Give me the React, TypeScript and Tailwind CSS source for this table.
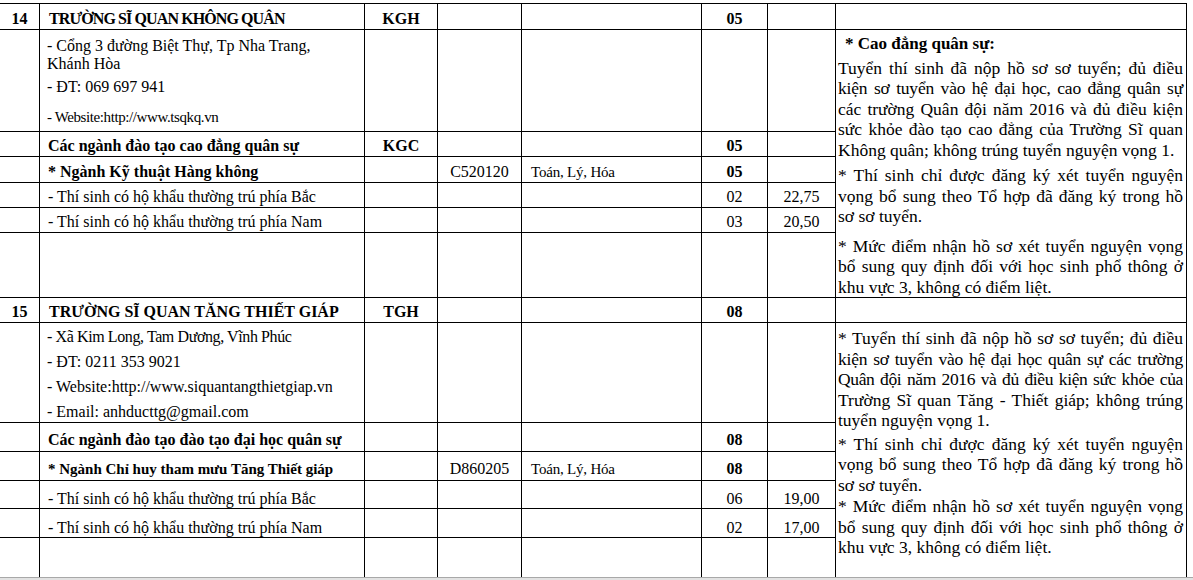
import React from "react";

type P = { children?: React.ReactNode; className?: string };

function Cell({ children, className = "" }: P) {
  return (
    <div className={`border-r border-b border-black flex items-center min-w-0 ${className}`}>
      {children}
    </div>
  );
}

function LastCell({ children, className = "" }: P) {
  return <div className={`border-r border-black flex min-w-0 ${className}`}>{children}</div>;
}

function J({ children, className = "" }: P) {
  return <div className={`text-justify [text-align-last:justify] ${className}`}>{children}</div>;
}

function L({ children }: P) {
  return <div className="whitespace-nowrap">{children}</div>;
}

function Empty({ n }: { n: number }) {
  return (
    <>
      {Array.from({ length: n }).map((_, i) => (
        <Cell key={i} />
      ))}
    </>
  );
}

function Para2() {
  return (
    <>
      <J>* Thí sinh chỉ được đăng ký xét tuyển nguyện</J>
      <J>vọng bổ sung theo Tổ hợp đã đăng ký trong hồ</J>
      <L>sơ sơ tuyển.</L>
    </>
  );
}

function Para3() {
  return (
    <>
      <J>* Mức điểm nhận hồ sơ xét tuyển nguyện vọng</J>
      <J>bổ sung quy định đối với học sinh phổ thông ở</J>
      <L>khu vực 3, không có điểm liệt.</L>
    </>
  );
}

export default function App() {
  return (
    <div className="w-[1193px] h-[580px] bg-white overflow-hidden font-['Liberation_Serif','Times_New_Roman',serif] text-black text-[16px] leading-[18px]">
      <div className="pt-[3px]">
        <div className="grid w-[1187px] grid-cols-[40px_325px_73px_84px_180px_66px_68px_351px] grid-rows-[26px_102px_25px_26px_25px_25px_65px_25px_100px_29px_29px_28px_29px_39px] border-t border-black">
          {/* Row 14 header */}
          <Cell className="justify-center pt-[4px] font-bold">14</Cell>
          <Cell className="pl-[9px] pt-[4px] font-bold tracking-[-0.9px]">TRƯỜNG SĨ QUAN KHÔNG QUÂN</Cell>
          <Cell className="justify-center pt-[4px] font-bold">KGH</Cell>
          <Empty n={2} />
          <Cell className="justify-center pt-[4px] font-bold">05</Cell>
          <Empty n={2} />

          {/* Address 14 */}
          <Cell />
          <Cell className="!items-start">
            <div className="pl-[7px] pt-[7px]">
              <div>- Cổng 3 đường Biệt Thự, Tp Nha Trang,</div>
              <div>Khánh Hòa</div>
              <div className="mt-[5px]">- ĐT: 069 697 941</div>
              <div className="mt-[12px] text-[15px] tracking-[-0.4px]">- Website:http://www.tsqkq.vn</div>
            </div>
          </Cell>
          <Empty n={5} />
          <Cell className="row-span-6 !items-start text-[17.5px] leading-[20.5px]">
            <div className="w-full pl-[2px] pr-[3px] pt-[4px]">
              <div className="pl-[7px] font-bold text-[17px]">* Cao đẳng quân sự:</div>
              <div className="mt-[3px]">
                <J>Tuyển thí sinh đã nộp hồ sơ sơ tuyển; đủ điều</J>
                <J className="tracking-[-0.2px]">kiện sơ tuyển vào hệ đại học, cao đẳng quân sự</J>
                <J>các trường Quân đội năm 2016 và đủ điều kiện</J>
                <J>sức khỏe đào tạo cao đẳng của Trường Sĩ quan</J>
                <L>Không quân; không trúng tuyển nguyện vọng 1.</L>
              </div>
              <div className="mt-[5px]">
                <Para2 />
              </div>
              <div className="mt-[9px]">
                <Para3 />
              </div>
            </div>
          </Cell>

          {/* KGC */}
          <Cell />
          <Cell className="pl-[8px] pt-[4px] font-bold">Các ngành đào tạo cao đẳng quân sự</Cell>
          <Cell className="justify-center pt-[4px] font-bold">KGC</Cell>
          <Empty n={2} />
          <Cell className="justify-center pt-[4px] font-bold">05</Cell>
          <Cell />

          {/* Ngành KT Hàng không */}
          <Cell />
          <Cell className="pl-[8px] pt-[4px] font-bold">* Ngành Kỹ thuật Hàng không</Cell>
          <Cell />
          <Cell className="justify-center pt-[4px]">C520120</Cell>
          <Cell className="pl-[9px] pt-[4px] text-[15px] tracking-[-0.2px]">Toán, Lý, Hóa</Cell>
          <Cell className="justify-center pt-[4px] font-bold">05</Cell>
          <Cell />

          <Cell />
          <Cell className="pl-[8px] pt-[4px]">- Thí sinh có hộ khẩu thường trú phía Bắc</Cell>
          <Empty n={3} />
          <Cell className="justify-center pt-[4px]">02</Cell>
          <Cell className="justify-center pt-[4px]">22,75</Cell>

          <Cell />
          <Cell className="pl-[8px] pt-[4px]">- Thí sinh có hộ khẩu thường trú phía Nam</Cell>
          <Empty n={3} />
          <Cell className="justify-center pt-[4px]">03</Cell>
          <Cell className="justify-center pt-[4px]">20,50</Cell>

          <Empty n={7} />

          {/* Row 15 header */}
          <Cell className="justify-center pt-[4px] font-bold">15</Cell>
          <Cell className="pl-[9px] pt-[4px] font-bold">TRƯỜNG SĨ QUAN TĂNG THIẾT GIÁP</Cell>
          <Cell className="justify-center pt-[4px] font-bold">TGH</Cell>
          <Empty n={2} />
          <Cell className="justify-center pt-[4px] font-bold">08</Cell>
          <Empty n={2} />

          {/* Address 15 */}
          <Cell />
          <Cell className="!items-start">
            <div className="pl-[7px] pt-[5px]">
              <div className="tracking-[-0.4px]">- Xã Kim Long, Tam Dương, Vĩnh Phúc</div>
              <div className="mt-[7px]">- ĐT: 0211 353 9021</div>
              <div className="mt-[7px]">- Website:http://www.siquantangthietgiap.vn</div>
              <div className="mt-[7px]">- Email: anhducttg@gmail.com</div>
            </div>
          </Cell>
          <Empty n={5} />
          <LastCell className="row-span-6 items-start text-[17.5px] leading-[20.5px]">
            <div className="w-full pl-[2px] pr-[3px] pt-[5px]">
              <div>
                <J>* Tuyển thí sinh đã nộp hồ sơ sơ tuyển; đủ điều</J>
                <J className="tracking-[-0.2px]">kiện sơ tuyển vào hệ đại học quân sự các trường</J>
                <J className="tracking-[-0.35px]">Quân đội năm 2016 và đủ điều kiện sức khỏe của</J>
                <J>Trường Sĩ quan Tăng - Thiết giáp; không trúng</J>
                <L>tuyển nguyện vọng 1.</L>
              </div>
              <div className="mt-[3px]">
                <Para2 />
              </div>
              <div className="mt-[1px]">
                <Para3 />
              </div>
            </div>
          </LastCell>

          <Cell />
          <Cell className="pl-[8px] pt-[6px] font-bold">Các ngành đào tạo đào tạo đại học quân sự</Cell>
          <Empty n={3} />
          <Cell className="justify-center pt-[6px] font-bold">08</Cell>
          <Cell />

          <Cell />
          <Cell className="pl-[8px] pt-[5px] font-bold text-[15px]">* Ngành Chỉ huy tham mưu Tăng Thiết giáp</Cell>
          <Cell />
          <Cell className="justify-center pt-[5px]">D860205</Cell>
          <Cell className="pl-[9px] pt-[5px] text-[15px] tracking-[-0.2px]">Toán, Lý, Hóa</Cell>
          <Cell className="justify-center pt-[5px] font-bold">08</Cell>
          <Cell />

          <Cell />
          <Cell className="pl-[8px] pt-[9px]">- Thí sinh có hộ khẩu thường trú phía Bắc</Cell>
          <Empty n={3} />
          <Cell className="justify-center pt-[9px]">06</Cell>
          <Cell className="justify-center pt-[9px]">19,00</Cell>

          <Cell />
          <Cell className="pl-[8px] pt-[9px]">- Thí sinh có hộ khẩu thường trú phía Nam</Cell>
          <Empty n={3} />
          <Cell className="justify-center pt-[9px]">02</Cell>
          <Cell className="justify-center pt-[9px]">17,00</Cell>

          <LastCell />
          <LastCell />
          <LastCell />
          <LastCell />
          <LastCell />
          <LastCell />
          <LastCell />
        </div>
      </div>
      <div className="h-[3px] border-t border-[#a8a8a8] bg-[#e2e2e2]" />
    </div>
  );
}
